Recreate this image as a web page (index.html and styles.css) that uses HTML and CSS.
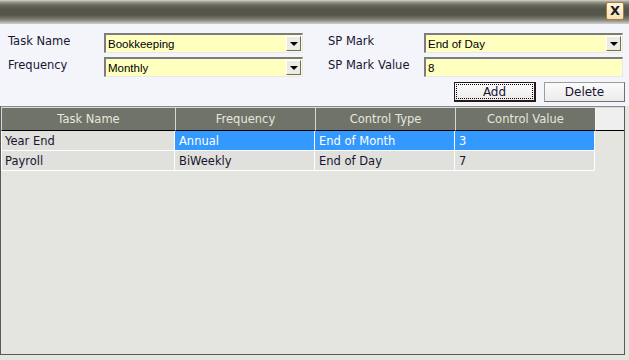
FILE: index.html
```html
<!DOCTYPE html>
<html lang="en">
<head>
  <meta charset="UTF-8">
  <title>Task Schedule</title>
  <link rel="stylesheet" href="styles.css">
</head>
<body>

<div class="window">
  <!-- Title bar -->
  <div class="titlebar">
    <button class="close-button">X</button>
  </div>

  <!-- Entry form -->
  <div class="form">
    <div class="fields">
      <label>Task Name</label>
      <div class="combo"><span>Bookkeeping</span><span class="arrow"></span></div>
      <span></span>
      <label>SP Mark</label>
      <div class="combo"><span>End of Day</span><span class="arrow"></span></div>

      <label>Frequency</label>
      <div class="combo"><span>Monthly</span><span class="arrow"></span></div>
      <span></span>
      <label>SP Mark Value</label>
      <div class="textbox">8</div>
    </div>

    <div class="action-buttons">
      <button class="btn focused"><span>Add</span></button>
      <button class="btn">Delete</button>
    </div>
  </div>

  <!-- Task grid -->
  <div class="grid-area">
    <div class="grid">
      <table id="taskTable">
        <thead>
          <tr>
            <th class="c1">Task Name</th>
            <th class="c2">Frequency</th>
            <th class="c3">Control Type</th>
            <th class="c4">Control Value</th>
            <th class="filler"></th>
          </tr>
        </thead>
        <tbody>
          <tr class="selected">
            <td>Year End</td>
            <td class="hl">Annual</td>
            <td class="hl">End of Month</td>
            <td class="hl">3</td>
            <td class="filler"></td>
          </tr>
          <tr>
            <td>Payroll</td>
            <td>BiWeekly</td>
            <td>End of Day</td>
            <td>7</td>
            <td class="filler"></td>
          </tr>
        </tbody>
      </table>
    </div>
  </div>
</div>

</body>
</html>
```

FILE: styles.css
```css
body {
  margin: 0;
  font-family: "DejaVu Sans", Verdana, sans-serif;
  font-size: 11px;
  color: #1a1430;
  background-color: #f3f5fa;
}

.window {
  width: 629px;
  height: 360px;
  display: flex;
  flex-direction: column;
  overflow: hidden;
}

.titlebar {
  height: 24px;
  box-sizing: border-box;
  display: flex;
  justify-content: flex-end;
  align-items: flex-start;
  padding: 2px 5px 0 0;
  background: linear-gradient(#d4d4cc 0, #9a9a8e 2px, #6a6a5c 5px, #55554a 9px, #55554a 15px, #7a7a6e 19px, #a8a8a0 22px, #c8c8c2 23px);
}

.close-button {
  width: 18px;
  height: 18px;
  padding: 0;
  border: 1px solid #b07a38;
  border-radius: 2px;
  background: linear-gradient(#fff8e4, #f2e2b8);
  font-family: "DejaVu Sans", sans-serif;
  font-weight: bold;
  font-size: 13px;
  line-height: 16px;
  color: #1a1a1a;
}

.form {
  padding: 9px 4px 0 8px;
}

.fields {
  display: grid;
  grid-template-columns: 96px 199px 25px 96px 199px;
  grid-auto-rows: 20px;
  row-gap: 4px;
}

.fields label {
  font-size: 11.5px;
  line-height: 14px;
  padding-top: 1px;
}

.combo, .textbox {
  box-sizing: border-box;
  height: 20px;
  display: flex;
  align-items: center;
  background-color: #ffffc0;
  border-top: 2px solid #7c7c7c;
  border-left: 2px solid #7c7c7c;
  border-bottom: 1px solid #e8e8e8;
  border-right: 1px solid #e8e8e8;
  font-family: "Liberation Sans", Arial, sans-serif;
  font-size: 11.5px;
  color: #000;
}

.combo span:first-child, .textbox {
  padding-left: 2px;
}

.combo span:first-child {
  flex: 1;
}

.arrow {
  width: 15px;
  height: 15px;
  box-sizing: border-box;
  margin-right: 1px;
  background-color: #ecebe6;
  border-top: 1px solid #ffffff;
  border-left: 1px solid #ffffff;
  border-bottom: 1px solid #6c6c6c;
  border-right: 1px solid #6c6c6c;
  position: relative;
}

.arrow::after {
  content: "";
  position: absolute;
  left: 3px;
  top: 5px;
  border-left: 4px solid transparent;
  border-right: 4px solid transparent;
  border-top: 4px solid #000;
}

.action-buttons {
  display: flex;
  justify-content: flex-end;
  gap: 8px;
  margin-top: 5px;
}

.btn {
  height: 20px;
  box-sizing: border-box;
  width: 81px;
  padding: 0;
  font-family: "DejaVu Sans", Verdana, sans-serif;
  font-size: 12px;
  color: #1a1430;
  background: linear-gradient(#fbfbfb, #ebebeb);
  border: 1px solid #9c9c9c;
  border-bottom-color: #707070;
  border-right-color: #707070;
}

.btn.focused {
  width: 82px;
  border: 2px solid #2a1818;
  border-top-width: 1px;
  border-left-width: 1px;
  padding: 1px;
}

.btn.focused span {
  display: block;
  height: 100%;
  box-sizing: border-box;
  border: 1px dotted #000;
  line-height: 14px;
}

.grid-area {
  flex: 1;
  padding: 4px 4px 5px 0;
  background: linear-gradient(#f3f5fa 4px, #e6e6e0 4px);
  display: flex;
}

.grid {
  flex: 1;
  border: 1px solid #5a5a5a;
  border-top-color: #8a8a8a;
  background-color: #e5e5df;
}

table {
  width: 100%;
  border-collapse: separate;
  border-spacing: 0;
  table-layout: fixed;
  font-size: 11.5px;
}

th {
  height: 22px;
  padding: 0;
  font-weight: normal;
  color: #e6e8de;
  background-color: #6f7369;
  border-top: 1px solid #d8d8d8;
  border-left: 1px solid #d8d8d8;
  border-bottom: 1px solid #000;
  text-align: center;
}

th.c1 { width: 173px; }
th.c2 { width: 139px; }
th.c3 { width: 139px; }
th.c4 { width: 139px; }

th.filler {
  background-color: #efefef;
  border-left: 1px solid #f8f8f8;
}

td {
  height: 19px;
  padding: 0 0 0 4px;
  background-color: #e0e0dc;
  border-right: 1px solid #ffffff;
  border-bottom: 1px solid #ffffff;
  white-space: nowrap;
}

td:first-child {
  padding-left: 3px;
  border-left: 1px solid #ffffff;
}

td.hl {
  background-color: #3399ff;
  color: #ffffff;
}

td.filler {
  background-color: #e5e5df;
  border: none;
}
```
